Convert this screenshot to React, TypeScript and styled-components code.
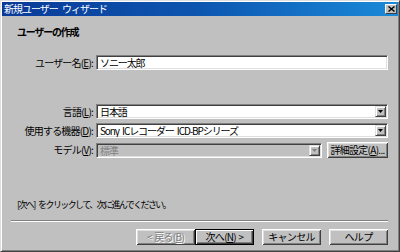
import React from "react";
import styled, { createGlobalStyle } from "styled-components";

const GlobalStyle = createGlobalStyle`
  html, body {
    margin: 0;
    padding: 0;
    background: #c0c0c0;
  }
  body {
    font-family: "Noto Sans CJK JP", "Liberation Sans", sans-serif;
    font-size: 10px;
    color: #000;
  }
`;

const Window = styled.div`
  width: 400px;
  height: 252px;
  box-sizing: border-box;
  display: flex;
  flex-direction: column;
  background: #c0c0c0;
  border-top: 1px solid #dfdfdf;
  border-left: 1px solid #dfdfdf;
  border-right: 1px solid #404040;
  border-bottom: 1px solid #404040;
  box-shadow: inset 1px 1px 0 #fff, inset -1px -1px 0 #808080;
  padding: 1px;
`;

const TitleBar = styled.div`
  height: 14px;
  display: flex;
  align-items: center;
  justify-content: space-between;
  padding: 0 1px 0 2px;
  background: linear-gradient(90deg, #0a3a98 0%, #0c56b0 50%, #1b8ad8 100%);
  color: #fff;
`;

const Title = styled.span`
  font-size: 10px;
  letter-spacing: -1px;
  word-spacing: 3px;
  white-space: pre;
  line-height: 14px;
`;

const CloseButton = styled.div`
  width: 12px;
  height: 10px;
  box-sizing: border-box;
  background: #c0c0c0;
  border-top: 1px solid #fff;
  border-left: 1px solid #fff;
  border-right: 1px solid #404040;
  border-bottom: 1px solid #404040;
  display: flex;
  align-items: center;
  justify-content: center;
`;

const Body = styled.div`
  flex: 1;
  display: flex;
  flex-direction: column;
  padding: 0 10px 0 9px;
`;

const Heading = styled.div`
  font-weight: bold;
  font-size: 10px;
  letter-spacing: -1.2px;
  margin: 9px 0 0 6px;
  line-height: 14px;
`;

const Form = styled.div`
  display: grid;
  grid-template-columns: 82px 1fr;
  column-gap: 3px;
  align-items: center;
`;

const Label = styled.label<{ $top: number }>`
  margin-top: ${p => p.$top}px;
  text-align: right;
  font-size: 10px;
  letter-spacing: -0.8px;
  white-space: nowrap;
  line-height: 14px;
`;

const Key = styled.span`
  text-decoration: underline;
`;

const FieldRow = styled.div<{ $top: number }>`
  margin-top: ${p => p.$top}px;
  display: flex;
  gap: 5px;
  align-items: center;
`;

const Sunken = styled.div<{ $disabled?: boolean }>`
  flex: 1;
  height: 15px;
  box-sizing: border-box;
  display: flex;
  align-items: center;
  background: ${p => (p.$disabled ? "#c0c0c0" : "#fff")};
  border-top: 1px solid #808080;
  border-left: 1px solid #808080;
  border-right: 1px solid #fff;
  border-bottom: 1px solid #fff;
  box-shadow: inset 1px 1px 0 #404040, inset -1px -1px 0 #dfdfdf;
  padding: 0 1px 0 3px;
  overflow: hidden;
`;

const FieldText = styled.span<{ $disabled?: boolean }>`
  flex: 1;
  font-size: 10px;
  letter-spacing: -1.1px;
  word-spacing: 2px;
  white-space: pre;
  color: ${p => (p.$disabled ? "#808080" : "#000")};
  line-height: 13px;
`;

const ArrowButton = styled.div<{ $disabled?: boolean }>`
  width: 11px;
  height: 11px;
  box-sizing: border-box;
  background: #c0c0c0;
  border-top: 1px solid #dfdfdf;
  border-left: 1px solid #dfdfdf;
  border-right: 1px solid #404040;
  border-bottom: 1px solid #404040;
  box-shadow: inset 1px 1px 0 #fff, inset -1px -1px 0 #808080;
  display: flex;
  align-items: center;
  justify-content: center;
  color: ${p => (p.$disabled ? "#808080" : "#000")};
`;

const Button = styled.button<{ $default?: boolean; $width?: number }>`
  width: ${p => p.$width ?? 59}px;
  height: 16px;
  box-sizing: border-box;
  padding: 0;
  margin: 0;
  font-family: inherit;
  font-size: 10px;
  letter-spacing: -0.7px;
  word-spacing: 1px;
  white-space: pre;
  line-height: 12px;
  background: #c0c0c0;
  color: #000;
  border: ${p => (p.$default ? "1px solid #000" : "none")};
  box-shadow: ${p =>
    p.$default
      ? "inset 1px 1px 0 #fff, inset -1px -1px 0 #404040, inset -2px -2px 0 #808080"
      : "inset 1px 1px 0 #fff, inset -1px -1px 0 #404040, inset 2px 2px 0 #dfdfdf, inset -2px -2px 0 #808080"};
  &:disabled {
    color: #808080;
    text-shadow: 1px 1px 0 #fff;
  }
`;

const Hint = styled.div`
  margin: 40px 0 0 6px;
  font-size: 9px;
  letter-spacing: -1.6px;
  word-spacing: 3px;
  white-space: pre;
  line-height: 14px;
`;

const Divider = styled.div`
  margin-top: 8px;
  height: 0;
  border-top: 1px solid #808080;
  border-bottom: 1px solid #fff;
`;

const ButtonBar = styled.div`
  margin-top: 7px;
  display: flex;
  justify-content: flex-end;
`;

const Spacer = styled.div<{ $w: number }>`
  width: ${p => p.$w}px;
`;

const DownArrow = () => (
  <svg width="5" height="3" viewBox="0 0 5 3">
    <path d="M0 0h5L2.5 3z" fill="currentColor" />
  </svg>
);

const Select: React.FC<{ value: string; disabled?: boolean }> = ({ value, disabled }) => (
  <Sunken $disabled={disabled}>
    <FieldText $disabled={disabled}>{value}</FieldText>
    <ArrowButton $disabled={disabled}>
      <DownArrow />
    </ArrowButton>
  </Sunken>
);

export default function App() {
  return (
    <>
      <GlobalStyle />
      <Window>
        <TitleBar>
          <Title>新規ユーザー ウィザード</Title>
          <CloseButton>
            <svg width="7" height="6" viewBox="0 0 7 6">
              <path d="M0.5 0.5l6 5M6.5 0.5l-6 5" stroke="#000" strokeWidth="1.4" />
            </svg>
          </CloseButton>
        </TitleBar>
        <Body>
          <Heading>ユーザーの作成</Heading>
          <Form>
            <Label $top={16}>
              ユーザー名(<Key>E</Key>):
            </Label>
            <FieldRow $top={16}>
              <Sunken>
                <FieldText>ソニー太郎</FieldText>
              </Sunken>
            </FieldRow>
            <Label $top={34}>
              言語(<Key>L</Key>):
            </Label>
            <FieldRow $top={34}>
              <Select value="日本語" />
            </FieldRow>
            <Label $top={4}>
              使用する機器(<Key>D</Key>):
            </Label>
            <FieldRow $top={4}>
              <Select value="Sony ICレコーダー ICD-BPシリーズ" />
            </FieldRow>
            <Label $top={4}>
              モデル(<Key>V</Key>):
            </Label>
            <FieldRow $top={4}>
              <Select value="標準" disabled />
              <Button $width={61}>
                詳細設定(<Key>A</Key>)...
              </Button>
            </FieldRow>
          </Form>
          <Hint>[次へ] をクリックして、次に進んでください。</Hint>
          <Divider />
          <ButtonBar>
            <Button disabled>
              &lt; 戻る(<Key>B</Key>)
            </Button>
            <Button $default>
              次へ(<Key>N</Key>) &gt;
            </Button>
            <Spacer $w={8} />
            <Button>キャンセル</Button>
            <Spacer $w={8} />
            <Button>ヘルプ</Button>
          </ButtonBar>
        </Body>
      </Window>
    </>
  );
}
